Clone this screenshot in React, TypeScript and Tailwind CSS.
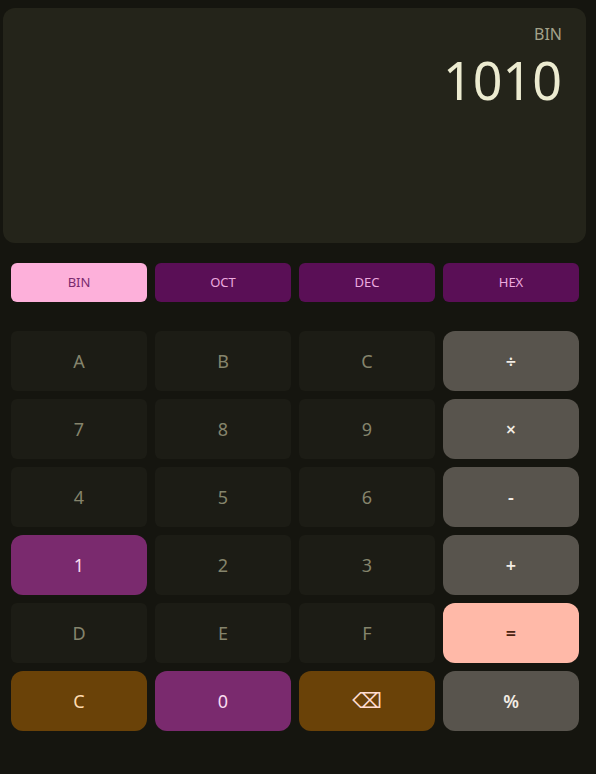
type Key = { label: string; kind: 'digit' | 'op' | 'accent' | 'clear' | 'equals' }

const keys: Key[] = [
  { label: 'A', kind: 'digit' },
  { label: 'B', kind: 'digit' },
  { label: 'C', kind: 'digit' },
  { label: '÷', kind: 'op' },
  { label: '7', kind: 'digit' },
  { label: '8', kind: 'digit' },
  { label: '9', kind: 'digit' },
  { label: '×', kind: 'op' },
  { label: '4', kind: 'digit' },
  { label: '5', kind: 'digit' },
  { label: '6', kind: 'digit' },
  { label: '-', kind: 'op' },
  { label: '1', kind: 'accent' },
  { label: '2', kind: 'digit' },
  { label: '3', kind: 'digit' },
  { label: '+', kind: 'op' },
  { label: 'D', kind: 'digit' },
  { label: 'E', kind: 'digit' },
  { label: 'F', kind: 'digit' },
  { label: '=', kind: 'equals' },
  { label: 'C', kind: 'clear' },
  { label: '0', kind: 'accent' },
  { label: 'back', kind: 'clear' },
  { label: '%', kind: 'op' },
]

const keyStyles: Record<Key['kind'], string> = {
  digit: 'bg-[#1c1c15] text-[#85846c] rounded-md',
  op: 'bg-[#58544d] text-[#f2ece4] font-semibold rounded-xl',
  accent: 'bg-[#7a2a6e] text-[#f8dcef] rounded-xl',
  clear: 'bg-[#6a4208] text-[#ffdcb0] rounded-xl',
  equals: 'bg-[#ffb9a8] text-[#4a2412] font-semibold rounded-xl',
}

const modes = ['BIN', 'OCT', 'DEC', 'HEX']

export default function App() {
  return (
    <div
      className="w-[596px] h-[774px] bg-[#15150f] overflow-hidden"
      style={{ fontFamily: '"Noto Sans", "Open Sans", sans-serif' }}
    >
      <div className="pl-[3px] pr-[10px] pt-2">
        <div className="h-[235px] rounded-xl bg-[#24241a] flex flex-col items-end pr-6 pt-[15px]">
          <span className="text-base leading-[22px] text-[#a3a28a]">BIN</span>
          <span className="text-[52px] leading-[60px] mt-[5px] text-[#ecebd0]">1010</span>
        </div>
      </div>

      <div className="pl-[11px] pr-[17px] pt-5">
        <div className="grid grid-cols-4 gap-2">
          {modes.map((m, i) => (
            <button
              key={m}
              className={`h-[39px] rounded-md text-[13px] flex items-center justify-center ${
                i === 0 ? 'bg-[#fdb0da] text-[#7a2a6e]' : 'bg-[#5a0f56] text-[#ecaadf]'
              }`}
            >
              {m}
            </button>
          ))}
        </div>

        <div className="grid grid-cols-4 gap-2 mt-[29px]">
          {keys.map((k, i) => (
            <button
              key={i}
              className={`h-[60px] flex items-center justify-center text-lg ${keyStyles[k.kind]}`}
            >
              {k.label === 'back' ? (
                <span className="text-[21px] leading-none text-[#ffdcd0]" style={{ fontFamily: '"DejaVu Sans", sans-serif' }}>
                  ⌫
                </span>
              ) : (
                k.label
              )}
            </button>
          ))}
        </div>
      </div>
    </div>
  )
}
